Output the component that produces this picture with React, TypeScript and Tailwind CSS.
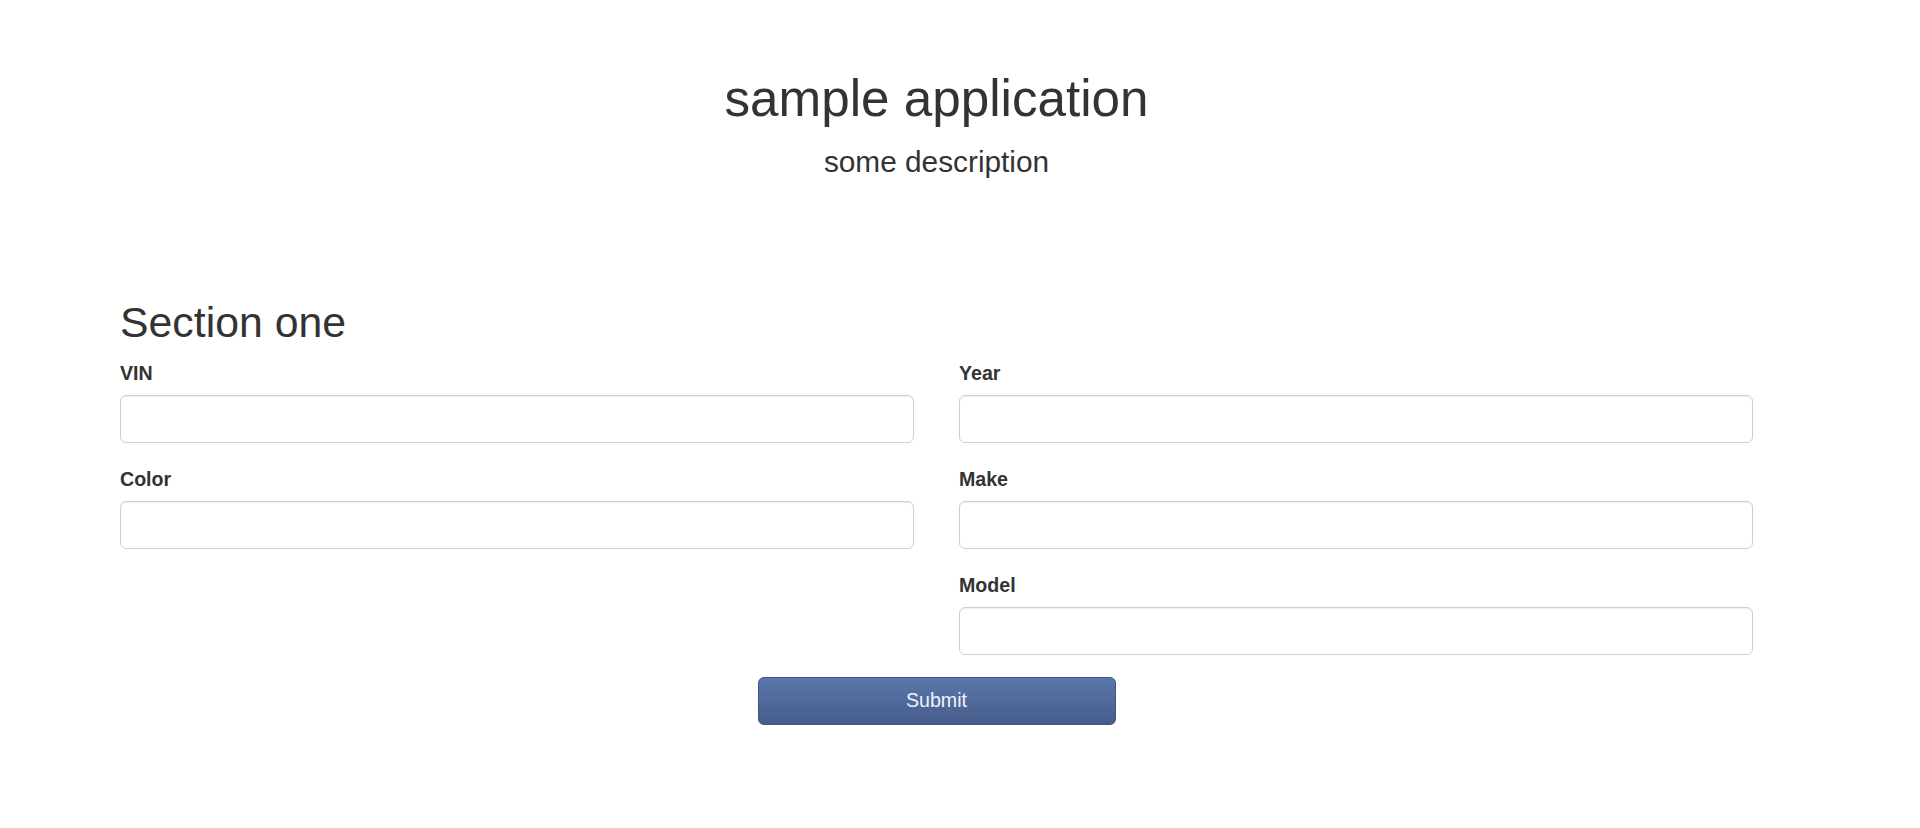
import React from "react";

const font = { fontFamily: '"Liberation Sans", Arial, Helvetica, sans-serif' };

function Field({ label }: { label: string }) {
  return (
    <div className="mb-[22px]">
      <label className="block text-[19.6px] leading-[28px] font-bold text-[#333] mb-[8px]">{label}</label>
      <input
        type="text"
        className="block w-full h-[48px] rounded-[6px] border border-[#cfcfcf] bg-white px-[17px] text-[19.6px] text-[#555] shadow-[inset_0_1px_1px_rgba(0,0,0,0.075)] outline-none"
      />
    </div>
  );
}

export default function App() {
  return (
    <div className="min-h-screen bg-white text-[#333]" style={font}>
      <div className="pl-[120px] pt-[71px]">
        <div className="w-[1633px]">
          <div className="text-center">
            <h1 className="text-[51.2px] leading-[55px] font-normal">sample application</h1>
            <p className="mt-[15px] text-[29.8px] leading-[41px] font-light">some description</p>
          </div>

          <form className="mt-[117px]" onSubmit={(e) => e.preventDefault()}>
            <h2 className="text-[42.8px] leading-[46px] font-normal mb-[14px]">Section one</h2>
            <div className="grid grid-cols-2 gap-x-[45px]">
              <div>
                <Field label="VIN" />
                <Field label="Color" />
              </div>
              <div>
                <Field label="Year" />
                <Field label="Make" />
                <Field label="Model" />
              </div>
            </div>
            <div className="flex justify-center">
              <button
                type="submit"
                className="w-[358px] h-[48px] rounded-[6px] border border-[#3f5483] bg-gradient-to-b from-[#5b77ab] to-[#465d8c] text-[19.6px] text-[#eef2fa]"
              >
                Submit
              </button>
            </div>
          </form>
        </div>
      </div>
    </div>
  );
}
